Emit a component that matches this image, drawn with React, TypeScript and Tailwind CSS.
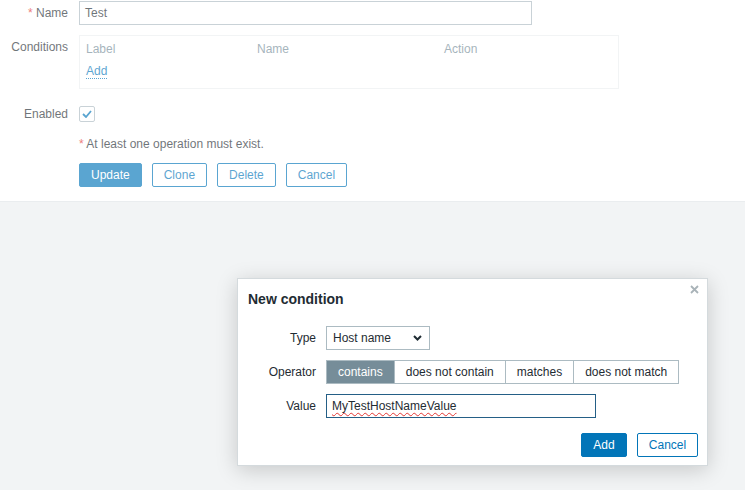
import { useState } from 'react'

function Btn({ label, primary }: { label: string; primary?: boolean }) {
  return (
    <button
      className={
        primary
          ? 'h-[24px] rounded-[2px] border border-[#0275b8] bg-[#0275b8] px-[11px] text-white'
          : 'h-[24px] rounded-[2px] border border-[#0275b8] bg-white px-[11px] text-[#0275b8]'
      }
    >
      {label}
    </button>
  )
}

function Dialog() {
  const [op, setOp] = useState('contains')
  const ops = ['contains', 'does not contain', 'matches', 'does not match']

  return (
    <div className="absolute left-[237px] top-[278px] flex h-[188px] w-[471px] flex-col border border-[#d4dadd] bg-white shadow-[0_4px_20px_rgba(0,0,0,0.18)]">
      <button className="absolute right-[7px] top-[4px] flex h-[12px] w-[12px] items-center justify-center">
        <svg width="9" height="9" viewBox="0 0 9 9">
          <path d="M1 1l7 7M8 1l-7 7" stroke="#a9b3b8" strokeWidth="1.8" />
        </svg>
      </button>
      <div className="px-[10px] pt-[11px] text-[14px] font-bold leading-[18px] text-[#1f2c33]">New condition</div>

      <div className="mt-[18px] flex flex-col gap-[10px] px-[10px]">
        <div className="flex items-center">
          <div className="w-[68px] text-right">Type</div>
          <div className="ml-[10px] flex h-[24px] w-[104px] items-center justify-between border border-[#acbbc2] pl-[6px] pr-[7px]">
            <span>Host name</span>
            <svg width="9" height="6" viewBox="0 0 9 6">
              <path d="M1 1l3.5 3.5L8 1" stroke="#1f2c33" strokeWidth="2" fill="none" />
            </svg>
          </div>
        </div>

        <div className="flex items-center">
          <div className="w-[68px] text-right">Operator</div>
          <div className="ml-[10px] flex h-[24px] border border-[#acbbc2]">
            {ops.map((o, i) => (
              <button
                key={o}
                onClick={() => setOp(o)}
                className={
                  (i > 0 ? 'border-l border-[#acbbc2] ' : '') +
                  (op === o ? 'bg-[#768d99] text-white ' : 'bg-white text-[#1f2c33] ') +
                  'px-[11px]'
                }
              >
                {o}
              </button>
            ))}
          </div>
        </div>

        <div className="flex items-center">
          <div className="w-[68px] text-right">Value</div>
          <div className="ml-[10px] flex h-[24px] w-[270px] items-center border border-[#245f86] px-[5px]">
            <span className="underline decoration-[#e33734] decoration-wavy decoration-1 underline-offset-2">MyTestHostNameValue</span>
          </div>
        </div>
      </div>

      <div className="mt-[15px] flex justify-end gap-[10px] px-[9px]">
        <button className="h-[24px] w-[46px] rounded-[2px] border border-[#0275b8] bg-[#0275b8] text-white">Add</button>
        <button className="h-[24px] w-[61px] rounded-[2px] border border-[#0275b8] bg-white text-[#0275b8]">Cancel</button>
      </div>
    </div>
  )
}

export default function App() {
  return (
    <div className="relative h-[490px] w-[745px] overflow-hidden bg-[#ebeef0] font-['Liberation_Sans',Arial,sans-serif] text-[12px] text-[#1f2c33]">
      <div className="h-[202px] border-b border-[#dfe4e7] bg-white pt-px">
        <div className="flex">
          <div className="w-[68px] text-right leading-[24px]">
            <span className="text-[#e33734]">*</span> Name
          </div>
          <div className="ml-[11px] flex h-[24px] w-[453px] items-center border border-[#acbbc2] px-[5px]">Test</div>
        </div>

        <div className="mt-[10px] flex">
          <div className="w-[68px] text-right leading-[24px]">Conditions</div>
          <div className="ml-[11px] h-[54px] w-[540px] border border-[#ebeef0] pl-[6px] pt-[5px]">
            <div className="flex leading-[16px] text-[#768d99]">
              <div className="w-[171px]">Label</div>
              <div className="w-[187px]">Name</div>
              <div>Action</div>
            </div>
            <div className="mt-[6px] leading-[16px]">
              <span className="border-b border-dotted border-[#0275b8] text-[#0275b8]">Add</span>
            </div>
          </div>
        </div>

        <div className="mt-[17px] flex items-center">
          <div className="w-[68px] text-right leading-[16px]">Enabled</div>
          <div className="ml-[11px] flex h-[16px] w-[16px] items-center justify-center rounded-[2px] border border-[#acbbc2]">
            <svg width="10" height="8" viewBox="0 0 10 8">
              <path d="M1 4l3 3 5-6" stroke="#0275b8" strokeWidth="1.8" fill="none" />
            </svg>
          </div>
        </div>

        <div className="ml-[79px] mt-[14px] leading-[16px]">
          <span className="text-[#e33734]">*</span> At least one operation must exist.
        </div>

        <div className="ml-[79px] mt-[11px] flex gap-[10px]">
          <Btn label="Update" primary />
          <Btn label="Clone" />
          <Btn label="Delete" />
          <Btn label="Cancel" />
        </div>
      </div>

      <div className="absolute inset-0 bg-white/35" />
      <Dialog />
    </div>
  )
}
